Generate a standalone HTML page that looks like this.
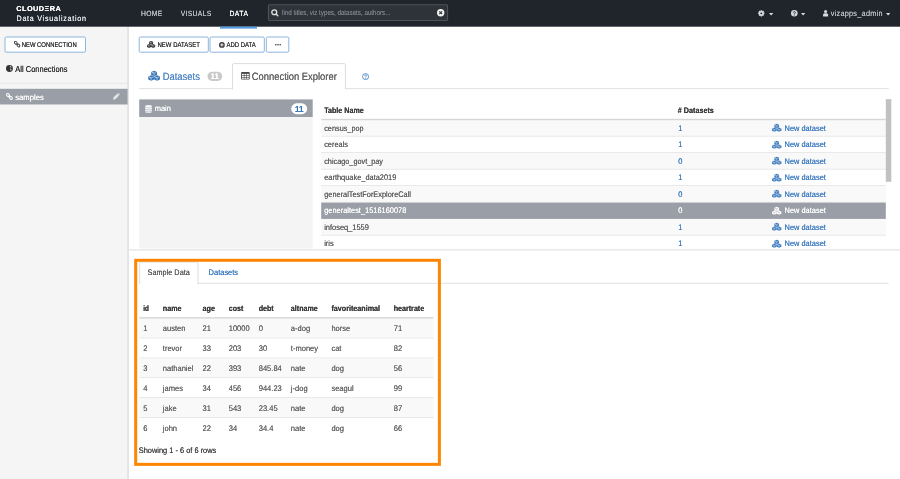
<!DOCTYPE html>
<html>
<head>
<meta charset="utf-8">
<title>Data Visualization</title>
<style>
*{box-sizing:border-box;margin:0;padding:0}
html,body{width:900px;height:479px;overflow:hidden;background:#fff}
body{font-family:"Liberation Sans",sans-serif;font-size:8px;color:#4a4a4a;position:relative}
.t{position:absolute;white-space:nowrap;transform-origin:0 50%}
svg{position:absolute;overflow:visible}
#shapes{left:0;top:0}
</style>
</head>
<body>

<!-- symbol defs -->
<svg width="0" height="0" style="left:-10px;top:-10px"><defs>
<g id="cubes">
<path d="M12 -0.6 L18 1.7999999999999998 V8.0 L12 10.6 L6 8.0 V1.7999999999999998Z" stroke-linejoin="round" stroke-width="1.2" stroke="inherit"/>
<path d="M6 8.8 L12 11.200000000000001 V17.4 L6 20.0 L0 17.4 V11.200000000000001Z" stroke-linejoin="round" stroke-width="1.2" stroke="inherit"/>
<path d="M18 8.8 L24 11.200000000000001 V17.4 L18 20.0 L12 17.4 V11.200000000000001Z" stroke-linejoin="round" stroke-width="1.2" stroke="inherit"/>
<path d="M7.1 2.5 L12 4.7" fill="none" stroke="currentColor" stroke-width="1.5"/>
<path d="M12 4.7 L16.9 2.5" fill="none" stroke="currentColor" stroke-width="0.9"/>
<path d="M12 4.7 V9.9" fill="none" stroke="currentColor" stroke-width="0.9"/>
<path d="M1.0999999999999996 11.9 L6 14.100000000000001" fill="none" stroke="currentColor" stroke-width="1.5"/>
<path d="M6 14.100000000000001 L10.9 11.9" fill="none" stroke="currentColor" stroke-width="0.9"/>
<path d="M6 14.100000000000001 V19.3" fill="none" stroke="currentColor" stroke-width="0.9"/>
<path d="M13.1 11.9 L18 14.100000000000001" fill="none" stroke="currentColor" stroke-width="1.5"/>
<path d="M18 14.100000000000001 L22.9 11.9" fill="none" stroke="currentColor" stroke-width="0.9"/>
<path d="M18 14.100000000000001 V19.3" fill="none" stroke="currentColor" stroke-width="0.9"/>
</g>
<g id="link" fill="none" stroke-width="1.8">
<ellipse cx="3.5" cy="3.5" rx="3.1" ry="2.2" transform="rotate(45 3.5 3.5)"/><ellipse cx="8.5" cy="8.5" rx="3.1" ry="2.2" transform="rotate(45 8.5 8.5)"/><path d="M4.6 4.6 L7.4 7.4" stroke-width="1.5"/>
</g>
<path id="caret" d="M0 0H8L4 4.8Z"/>
</defs></svg>

<!-- all boxes / lines (anti-aliased, fractional coordinates) -->
<svg id="shapes" width="900" height="479" viewBox="0 0 900 479">
<rect x="0.00" y="26.70" width="128.30" height="452.30" fill="#f5f5f5"/>
<rect x="127.20" y="26.70" width="1.70" height="452.30" fill="#e1e1e1"/>
<rect x="0.00" y="0.00" width="900.00" height="26.70" fill="#20252c"/>
<rect x="220.00" y="26.70" width="37.00" height="1.90" fill="#4f9be6"/>
<rect x="268.45" y="4.75" width="179.10" height="15.70" rx="1.2" fill="#2e3339" stroke="#4f5358" stroke-width="1.1"/>
<rect x="5.00" y="37.00" width="80.50" height="15.20" rx="1.3" fill="#fff" stroke="#8db4dd" stroke-width="1"/>
<rect x="139.20" y="37.00" width="69.10" height="15.20" rx="1.3" fill="#fff" stroke="#8db4dd" stroke-width="1"/>
<rect x="210.00" y="37.00" width="54.30" height="15.20" rx="1.3" fill="#fff" stroke="#8db4dd" stroke-width="1"/>
<rect x="266.30" y="37.00" width="22.50" height="15.20" rx="1.3" fill="#fff" stroke="#8db4dd" stroke-width="1"/>
<rect x="0.00" y="82.80" width="127.90" height="1.00" fill="#e6e6e6"/>
<rect x="0.00" y="88.80" width="127.60" height="15.70" fill="#9a9fa7"/>
<rect x="139.20" y="88.10" width="749.50" height="1.00" fill="#e2e2e2"/>
<path d="M232.5 89.4 V65 Q232.5 63.6 233.9 63.6 H344.0 Q345.4 63.6 345.4 65 V89.4" fill="#fff" stroke="#dddddd" stroke-width="1"/>
<rect x="207.5" y="71.7" width="14.7" height="9.2" rx="4.6" fill="#c9c9c9"/>
<rect x="139.20" y="117.00" width="173.50" height="131.50" fill="#f4f4f4"/>
<rect x="139.20" y="99.40" width="173.50" height="17.60" fill="#9a9fa7"/>
<rect x="291.2" y="103.3" width="16" height="10.9" rx="5.45" fill="#fff"/>
<rect x="321.20" y="119.95" width="564.60" height="16.50" fill="#f9f9f9"/>
<rect x="321.20" y="135.90" width="564.60" height="1.10" fill="#d9d9d9"/>
<rect x="321.20" y="136.45" width="564.60" height="16.50" fill="#fff"/>
<rect x="321.20" y="152.40" width="564.60" height="1.10" fill="#d9d9d9"/>
<rect x="321.20" y="152.95" width="564.60" height="16.50" fill="#f9f9f9"/>
<rect x="321.20" y="168.90" width="564.60" height="1.10" fill="#d9d9d9"/>
<rect x="321.20" y="169.45" width="564.60" height="16.50" fill="#fff"/>
<rect x="321.20" y="185.40" width="564.60" height="1.10" fill="#d9d9d9"/>
<rect x="321.20" y="185.95" width="564.60" height="16.50" fill="#f9f9f9"/>
<rect x="321.20" y="201.90" width="564.60" height="1.10" fill="#d9d9d9"/>
<rect x="321.20" y="202.85" width="564.60" height="16.10" fill="#9a9fa7"/>
<rect x="321.20" y="218.95" width="564.60" height="16.50" fill="#f9f9f9"/>
<rect x="321.20" y="234.90" width="564.60" height="1.10" fill="#d9d9d9"/>
<rect x="321.20" y="235.45" width="564.60" height="13.75" fill="#fff"/>
<rect x="321.20" y="118.80" width="564.60" height="1.40" fill="#d6d6d6"/>
<rect x="885.80" y="99.20" width="5.50" height="82.60" fill="#c1c1c1"/>
<rect x="128.90" y="249.40" width="771.10" height="1.00" fill="#dcdcdc"/>
<rect x="139.20" y="282.80" width="749.50" height="1.00" fill="#e2e2e2"/>
<path d="M139.7 284.4 V263.4 Q139.7 262 141.1 262 H196.6 Q198.0 262 198.0 263.4 V284.4" fill="#fff" stroke="#dddddd" stroke-width="1"/>
<rect x="139.20" y="318.45" width="294.20" height="19.88" fill="#f9f9f9"/>
<rect x="139.20" y="337.78" width="294.20" height="1.10" fill="#d9d9d9"/>
<rect x="139.20" y="338.33" width="294.20" height="19.88" fill="#fff"/>
<rect x="139.20" y="357.66" width="294.20" height="1.10" fill="#d9d9d9"/>
<rect x="139.20" y="358.21" width="294.20" height="19.88" fill="#f9f9f9"/>
<rect x="139.20" y="377.54" width="294.20" height="1.10" fill="#d9d9d9"/>
<rect x="139.20" y="378.09" width="294.20" height="19.88" fill="#fff"/>
<rect x="139.20" y="397.42" width="294.20" height="1.10" fill="#d9d9d9"/>
<rect x="139.20" y="397.97" width="294.20" height="19.88" fill="#f9f9f9"/>
<rect x="139.20" y="417.30" width="294.20" height="1.10" fill="#d9d9d9"/>
<rect x="139.20" y="417.85" width="294.20" height="19.88" fill="#fff"/>
<rect x="139.20" y="317.20" width="294.20" height="1.40" fill="#d6d6d6"/>
</svg>

<!-- NAVBAR icons -->
<svg style="left:270.7px;top:9.0px" width="7.6" height="7.6" viewBox="0 0 14 14"><circle cx="6" cy="6" r="4.5" fill="none" stroke="#dfe1e3" stroke-width="2.5"/><path d="M9.6 9.6 L12.6 12.6" stroke="#dfe1e3" stroke-width="2.6" stroke-linecap="round"/></svg>
<svg style="left:436.6px;top:9px" width="7.4" height="7.4" viewBox="0 0 16 16"><circle cx="8" cy="8" r="8" fill="#f2f2f2"/><path d="M5 5 L11 11 M11 5 L5 11" stroke="#2d3239" stroke-width="2.6" stroke-linecap="butt"/></svg>
<svg style="left:758.4px;top:10.3px" width="6.6" height="6.6" viewBox="0 0 16 16"><circle cx="8" cy="8" r="4.3" fill="none" stroke="#d5d7da" stroke-width="4.2"/><g stroke="#d5d7da" stroke-width="3.6"><path d="M8 0.4v3M8 12.6v3M0.4 8h3M12.6 8h3M2.6 2.6l2.2 2.2M11.2 11.2l2.2 2.2M2.6 13.4l2.2-2.2M11.2 4.8l2.2-2.2"/></g></svg>
<svg style="left:768.6px;top:12.9px" width="4.3" height="2.6" viewBox="0 0 8 4.8"><use href="#caret" fill="#d8dadd"/></svg>
<svg style="left:790.6px;top:10.3px" width="6.6" height="6.6" viewBox="0 0 16 16"><circle cx="8" cy="8" r="8" fill="#d5d7da"/><path d="M5.4 6.2 C5.4 3.2 10.6 3.2 10.6 6.2 C10.6 8 8 8 8 10" fill="none" stroke="#20252c" stroke-width="2.1"/><rect x="6.9" y="11.1" width="2.2" height="2.2" fill="#20252c"/></svg>
<svg style="left:800.5px;top:12.9px" width="4.3" height="2.6" viewBox="0 0 8 4.8"><use href="#caret" fill="#d8dadd"/></svg>
<svg style="left:822.7px;top:10.2px" width="5.2" height="6.6" viewBox="0 0 10 13"><circle cx="5" cy="3" r="3" fill="#d8dadd"/><path d="M0 13 V9 C0 5.5 10 5.5 10 9 V13Z" fill="#d8dadd"/></svg>
<svg style="left:886.1px;top:12.9px" width="4.3" height="2.6" viewBox="0 0 8 4.8"><use href="#caret" fill="#d8dadd"/></svg>

<!-- SIDEBAR icons -->
<svg style="left:13.7px;top:41.4px" width="6.3" height="6.3" viewBox="0 0 12 12"><use href="#link" stroke="#3c3c3c"/></svg>
<svg style="left:6px;top:65.4px" width="6.9" height="6.9" viewBox="0 0 16 16"><circle cx="8" cy="8" r="8" fill="#333"/><path d="M9.6 2.2 C11.4 2.4 12.8 3.6 13.4 5 C12.4 5.4 11.2 4.8 10.6 5.6 C10 6.4 9 5.6 9 4.4 C9 3.4 9.2 2.8 9.6 2.2Z M10 8.6 C11.2 8 13 8.8 13 10 C12.6 11.6 11.6 12.8 10.4 13.4 C10.8 11.8 9.2 10 10 8.6Z" fill="#f4f4f4" opacity=".85"/></svg>
<svg style="left:6.1px;top:93.2px" width="6.8" height="6.8" viewBox="0 0 12 12"><use href="#link" stroke="#fff"/></svg>
<svg style="left:113.3px;top:93.2px" width="6.8" height="6.8" viewBox="0 0 12 12"><path d="M0.2 11.8 L0.9 8 L7.4 1.5 L10.5 4.6 L4 11.1Z" fill="#e6e8ea"/><path d="M8.2 0.7 L11.3 3.8 L12 2.2 L9.8 0Z" fill="#e6e8ea"/></svg>

<!-- button icons -->
<svg style="left:147.2px;top:41.0px" width="8.2" height="7" viewBox="0 0 24 20"><use href="#cubes" fill="#333" color="#fff"/></svg>
<svg style="left:218.8px;top:41.8px" width="5.8" height="5.8" viewBox="0 0 16 16"><circle cx="8" cy="8" r="8" fill="#3c3c3c"/><path d="M8 3.5V12.5M3.5 8H12.5" stroke="#fff" stroke-width="2.6"/></svg>
<svg style="left:274.6px;top:43.8px" width="6" height="1.6" viewBox="0 0 15 4"><circle cx="2" cy="2" r="2" fill="#3c3c3c"/><circle cx="7.5" cy="2" r="2" fill="#3c3c3c"/><circle cx="13" cy="2" r="2" fill="#3c3c3c"/></svg>

<!-- tab icons -->
<svg style="left:147.5px;top:71.2px" width="12.2" height="9.8" viewBox="0 0 24 20"><use href="#cubes" fill="#3b78b8" color="#fff"/></svg>
<svg style="left:240.9px;top:72.2px" width="8.8" height="7.6" viewBox="0 0 17 15"><rect x="0" y="0" width="17" height="15" rx="1.6" fill="#484848"/><rect x="1.7" y="3.7" width="3.7" height="2.5" fill="#fff"/><rect x="1.7" y="7.4" width="3.7" height="2.5" fill="#fff"/><rect x="1.7" y="11.1" width="3.7" height="2.4" fill="#fff"/><rect x="6.6" y="3.7" width="3.8" height="2.5" fill="#fff"/><rect x="6.6" y="7.4" width="3.8" height="2.5" fill="#fff"/><rect x="6.6" y="11.1" width="3.8" height="2.4" fill="#fff"/><rect x="11.6" y="3.7" width="3.7" height="2.5" fill="#fff"/><rect x="11.6" y="7.4" width="3.7" height="2.5" fill="#fff"/><rect x="11.6" y="11.1" width="3.7" height="2.4" fill="#fff"/></svg>
<svg style="left:362.2px;top:72.5px" width="7.2" height="7.2" viewBox="0 0 16 16"><circle cx="8" cy="8" r="6.7" fill="none" stroke="#4a86c6" stroke-width="2"/><path d="M5.8 6.4 C5.8 3.8 10.2 3.8 10.2 6.4 C10.2 7.9 8 8 8 9.8" fill="none" stroke="#4a86c6" stroke-width="1.9"/><rect x="7.1" y="10.7" width="1.9" height="1.9" fill="#4a86c6"/></svg>
<svg style="left:145.3px;top:104.8px" width="7" height="7.9" viewBox="0 0 12 14"><ellipse cx="6" cy="2.5" rx="6" ry="2.5" fill="#f4f5f6"/><path d="M0 4.2 C2 6 10 6 12 4.2 V7 C10 8.8 2 8.8 0 7Z M0 7.9 C2 9.7 10 9.7 12 7.9 V10.7 C10 12.5 2 12.5 0 10.7Z M0 11.6 C2 13.4 10 13.4 12 11.6 V12.2 C10 14.6 2 14.6 0 12.2Z" fill="#f4f5f6"/></svg>

<svg style="left:772.3px;top:124.05px" width="9.4" height="7.9" viewBox="0 0 24 20"><use href="#cubes" fill="#3f7dc0" color="#f9f9f9"/></svg>
<svg style="left:772.3px;top:140.55px" width="9.4" height="7.9" viewBox="0 0 24 20"><use href="#cubes" fill="#3f7dc0" color="#fff"/></svg>
<svg style="left:772.3px;top:157.05px" width="9.4" height="7.9" viewBox="0 0 24 20"><use href="#cubes" fill="#3f7dc0" color="#f9f9f9"/></svg>
<svg style="left:772.3px;top:173.55px" width="9.4" height="7.9" viewBox="0 0 24 20"><use href="#cubes" fill="#3f7dc0" color="#fff"/></svg>
<svg style="left:772.3px;top:190.05px" width="9.4" height="7.9" viewBox="0 0 24 20"><use href="#cubes" fill="#3f7dc0" color="#f9f9f9"/></svg>
<svg style="left:772.3px;top:206.55px" width="9.4" height="7.9" viewBox="0 0 24 20"><use href="#cubes" fill="#fff" color="#9a9fa7"/></svg>
<svg style="left:772.3px;top:223.05px" width="9.4" height="7.9" viewBox="0 0 24 20"><use href="#cubes" fill="#3f7dc0" color="#f9f9f9"/></svg>
<svg style="left:772.3px;top:239.55px" width="9.4" height="7.9" viewBox="0 0 24 20"><use href="#cubes" fill="#3f7dc0" color="#fff"/></svg>

<div id="txt" style="position:absolute;left:0;top:0;width:900px;height:479px;opacity:.999;will-change:opacity;text-rendering:geometricPrecision;text-shadow:0 0 .45px currentColor">
<div class="t" id="logo1" style="left:16px;top:4.90px;font-size:7.1px;line-height:9.94px;height:9.94px;color:#fff;font-weight:bold;letter-spacing:0.394px;transform:translateX(0.30px) scaleX(1.0400);">CLOUDΞRA</div>
<div class="t" id="logo2" style="left:16px;top:12.70px;font-size:7.9px;line-height:11.06px;height:11.06px;color:#e9ebed;letter-spacing:0.835px;transform:translateX(0.50px) scaleX(0.9000);">Data Visualization</div>
<div class="t" id="n1" style="left:141px;top:9.00px;font-size:7.5px;line-height:10.5px;height:10.5px;color:#bfc3c7;letter-spacing:0.352px;transform:translateX(0.00px) scaleX(0.9000);">HOME</div>
<div class="t" id="n2" style="left:180px;top:9.00px;font-size:7.5px;line-height:10.5px;height:10.5px;color:#bfc3c7;letter-spacing:0.385px;transform:translateX(0.70px) scaleX(0.9000);">VISUALS</div>
<div class="t" id="n3" style="left:229px;top:9.00px;font-size:7.5px;line-height:10.5px;height:10.5px;color:#ffffff;letter-spacing:0.555px;transform:translateX(0.50px) scaleX(0.9000);">DATA</div>
<div class="t" id="srch" style="left:281px;top:7.90px;font-size:7.3px;line-height:10.22px;height:10.22px;color:#787e86;transform:translateX(0.70px) scaleX(0.8535);">find titles, viz types, datasets, authors...</div>
<div class="t" id="usr" style="left:830px;top:7.90px;font-size:8.1px;line-height:11.34px;height:11.34px;color:#b9bdc2;letter-spacing:0.296px;transform:translateX(0.70px) scaleX(0.9000);">vizapps_admin</div>
<div class="t" id="b1" style="left:21px;top:41.30px;font-size:6.9px;line-height:9.66px;height:9.66px;color:#333;transform:translateX(0.70px) scaleX(0.8552);">NEW CONNECTION</div>
<div class="t" id="allc" style="left:15px;top:62.70px;font-size:8.6px;line-height:12.04px;height:12.04px;color:#333;transform:translateX(0.30px) scaleX(0.8741);">All Connections</div>
<div class="t" id="smp" style="left:15px;top:91.90px;font-size:8.125px;line-height:11.38px;height:11.38px;color:#fff;transform:translateX(0.30px) scaleX(0.9403);">samples</div>
<div class="t" id="b2" style="left:157px;top:41.30px;font-size:6.9px;line-height:9.66px;height:9.66px;color:#333;transform:translateX(0.50px) scaleX(0.8697);">NEW DATASET</div>
<div class="t" id="b3" style="left:226px;top:41.30px;font-size:6.9px;line-height:9.66px;height:9.66px;color:#333;transform:translateX(0.50px) scaleX(0.8661);">ADD DATA</div>
<div class="t" id="tab1" style="left:162px;top:69.90px;font-size:10.6px;line-height:14.84px;height:14.84px;color:#558bc7;transform:translateX(0.70px) scaleX(0.8897);">Datasets</div>
<div class="t" id="bd1" style="left:210px;top:71.30px;font-size:8.0px;line-height:11.2px;height:11.2px;color:#fff;font-weight:bold;transform:translateX(0.60px) scaleX(0.9683);">11</div>
<div class="t" id="tab2" style="left:251px;top:70.00px;font-size:10.6px;line-height:14.84px;height:14.84px;color:#636363;transform:translateX(0.80px) scaleX(0.8854);">Connection Explorer</div>
<div class="t" id="mn" style="left:154px;top:103.00px;font-size:8.125px;line-height:11.38px;height:11.38px;color:#fff;transform:translateX(0.80px) scaleX(0.9159);">main</div>
<div class="t" id="bd2" style="left:294px;top:102.90px;font-size:8.8px;line-height:12.32px;height:12.32px;color:#3b78b8;font-weight:bold;transform:translateX(0.90px) scaleX(0.9235);">11</div>
<div class="t" id="th1" style="left:324px;top:105.40px;font-size:8.125px;line-height:11.38px;height:11.38px;color:#3d3d3d;font-weight:bold;transform:translateX(0.20px) scaleX(0.8793);">Table Name</div>
<div class="t" id="th2" style="left:677px;top:105.40px;font-size:8.125px;line-height:11.38px;height:11.38px;color:#3d3d3d;font-weight:bold;transform:translateX(0.80px) scaleX(0.8872);"># Datasets</div>
<div class="t" id="r0" style="left:324px;top:122.75px;font-size:8.125px;line-height:11.38px;height:11.38px;color:#606060;transform:translateX(0.20px) scaleX(0.9006);">census_pop</div>
<div class="t" id="k0" style="left:678px;top:122.75px;font-size:8.125px;line-height:11.38px;height:11.38px;color:#3f7dc0;transform:translateX(0.20px) scaleX(0.9300);">1</div>
<div class="t" id="nd0" style="left:784px;top:122.75px;font-size:8.125px;line-height:11.38px;height:11.38px;color:#3f7dc0;transform:translateX(0.50px) scaleX(0.9184);">New dataset</div>
<div class="t" id="r1" style="left:324px;top:139.25px;font-size:8.125px;line-height:11.38px;height:11.38px;color:#606060;transform:translateX(0.20px) scaleX(0.9061);">cereals</div>
<div class="t" id="k1" style="left:678px;top:139.25px;font-size:8.125px;line-height:11.38px;height:11.38px;color:#3f7dc0;transform:translateX(0.20px) scaleX(0.9300);">1</div>
<div class="t" id="nd1" style="left:784px;top:139.25px;font-size:8.125px;line-height:11.38px;height:11.38px;color:#3f7dc0;transform:translateX(0.50px) scaleX(0.9184);">New dataset</div>
<div class="t" id="r2" style="left:324px;top:155.75px;font-size:8.125px;line-height:11.38px;height:11.38px;color:#606060;transform:translateX(0.20px) scaleX(0.8994);">chicago_govt_pay</div>
<div class="t" id="k2" style="left:678px;top:155.75px;font-size:8.125px;line-height:11.38px;height:11.38px;color:#3f7dc0;transform:translateX(0.20px) scaleX(0.9300);">0</div>
<div class="t" id="nd2" style="left:784px;top:155.75px;font-size:8.125px;line-height:11.38px;height:11.38px;color:#3f7dc0;transform:translateX(0.50px) scaleX(0.9184);">New dataset</div>
<div class="t" id="r3" style="left:324px;top:172.25px;font-size:8.125px;line-height:11.38px;height:11.38px;color:#606060;transform:translateX(0.20px) scaleX(0.9136);">earthquake_data2019</div>
<div class="t" id="k3" style="left:678px;top:172.25px;font-size:8.125px;line-height:11.38px;height:11.38px;color:#3f7dc0;transform:translateX(0.20px) scaleX(0.9300);">1</div>
<div class="t" id="nd3" style="left:784px;top:172.25px;font-size:8.125px;line-height:11.38px;height:11.38px;color:#3f7dc0;transform:translateX(0.50px) scaleX(0.9184);">New dataset</div>
<div class="t" id="r4" style="left:324px;top:188.75px;font-size:8.125px;line-height:11.38px;height:11.38px;color:#606060;transform:translateX(0.20px) scaleX(0.9083);">generalTestForExploreCall</div>
<div class="t" id="k4" style="left:678px;top:188.75px;font-size:8.125px;line-height:11.38px;height:11.38px;color:#3f7dc0;transform:translateX(0.20px) scaleX(0.9300);">0</div>
<div class="t" id="nd4" style="left:784px;top:188.75px;font-size:8.125px;line-height:11.38px;height:11.38px;color:#3f7dc0;transform:translateX(0.50px) scaleX(0.9184);">New dataset</div>
<div class="t" id="r5" style="left:324px;top:205.25px;font-size:8.125px;line-height:11.38px;height:11.38px;color:#fff;transform:translateX(0.20px) scaleX(0.9149);">generaltest_1516160078</div>
<div class="t" id="k5" style="left:678px;top:205.25px;font-size:8.125px;line-height:11.38px;height:11.38px;color:#fff;transform:translateX(0.20px) scaleX(0.9300);">0</div>
<div class="t" id="nd5" style="left:784px;top:205.25px;font-size:8.125px;line-height:11.38px;height:11.38px;color:#fff;transform:translateX(0.50px) scaleX(0.9184);">New dataset</div>
<div class="t" id="r6" style="left:324px;top:221.75px;font-size:8.125px;line-height:11.38px;height:11.38px;color:#606060;transform:translateX(0.20px) scaleX(0.9178);">infoseq_1559</div>
<div class="t" id="k6" style="left:678px;top:221.75px;font-size:8.125px;line-height:11.38px;height:11.38px;color:#3f7dc0;transform:translateX(0.20px) scaleX(0.9300);">1</div>
<div class="t" id="nd6" style="left:784px;top:221.75px;font-size:8.125px;line-height:11.38px;height:11.38px;color:#3f7dc0;transform:translateX(0.50px) scaleX(0.9184);">New dataset</div>
<div class="t" id="r7" style="left:324px;top:238.25px;font-size:8.125px;line-height:11.38px;height:11.38px;color:#606060;transform:translateX(0.20px) scaleX(0.9267);">iris</div>
<div class="t" id="k7" style="left:678px;top:238.25px;font-size:8.125px;line-height:11.38px;height:11.38px;color:#3f7dc0;transform:translateX(0.20px) scaleX(0.9300);">1</div>
<div class="t" id="nd7" style="left:784px;top:238.25px;font-size:8.125px;line-height:11.38px;height:11.38px;color:#3f7dc0;transform:translateX(0.50px) scaleX(0.9184);">New dataset</div>
<div class="t" id="st1" style="left:147px;top:267.30px;font-size:8.125px;line-height:11.38px;height:11.38px;color:#5a5a5a;transform:translateX(0.60px) scaleX(0.9000);">Sample Data</div>
<div class="t" id="st2" style="left:208px;top:267.30px;font-size:8.125px;line-height:11.38px;height:11.38px;color:#3f7dc0;transform:translateX(0.60px) scaleX(0.9214);">Datasets</div>
<div class="t" id="bh0" style="left:143px;top:302.60px;font-size:8.125px;line-height:11.38px;height:11.38px;color:#3d3d3d;font-weight:bold;transform:translateX(0.30px) scaleX(0.7758);">id</div>
<div class="t" id="bh1" style="left:162px;top:302.60px;font-size:8.125px;line-height:11.38px;height:11.38px;color:#3d3d3d;font-weight:bold;transform:translateX(0.80px) scaleX(0.8826);">name</div>
<div class="t" id="bh2" style="left:202px;top:302.60px;font-size:8.125px;line-height:11.38px;height:11.38px;color:#3d3d3d;font-weight:bold;transform:translateX(0.50px) scaleX(0.8939);">age</div>
<div class="t" id="bh3" style="left:228px;top:302.60px;font-size:8.125px;line-height:11.38px;height:11.38px;color:#3d3d3d;font-weight:bold;transform:translateX(0.70px) scaleX(0.8749);">cost</div>
<div class="t" id="bh4" style="left:258px;top:302.60px;font-size:8.125px;line-height:11.38px;height:11.38px;color:#3d3d3d;font-weight:bold;transform:translateX(0.70px) scaleX(0.8759);">debt</div>
<div class="t" id="bh5" style="left:290px;top:302.60px;font-size:8.125px;line-height:11.38px;height:11.38px;color:#3d3d3d;font-weight:bold;transform:translateX(0.80px) scaleX(0.8807);">altname</div>
<div class="t" id="bh6" style="left:331px;top:302.60px;font-size:8.125px;line-height:11.38px;height:11.38px;color:#3d3d3d;font-weight:bold;transform:translateX(0.40px) scaleX(0.8857);">favoriteanimal</div>
<div class="t" id="bh7" style="left:393px;top:302.60px;font-size:8.125px;line-height:11.38px;height:11.38px;color:#3d3d3d;font-weight:bold;transform:translateX(0.70px) scaleX(0.8785);">heartrate</div>
<div class="t" id="c0_0" style="left:143px;top:323.10px;font-size:8.125px;line-height:11.38px;height:11.38px;color:#666;transform:translateX(0.30px) scaleX(0.9300);">1</div>
<div class="t" id="c0_1" style="left:162px;top:323.10px;font-size:8.125px;line-height:11.38px;height:11.38px;color:#666;transform:translateX(0.80px) scaleX(0.9300);">austen</div>
<div class="t" id="c0_2" style="left:202px;top:323.10px;font-size:8.125px;line-height:11.38px;height:11.38px;color:#666;transform:translateX(0.50px) scaleX(0.9300);">21</div>
<div class="t" id="c0_3" style="left:228px;top:323.10px;font-size:8.125px;line-height:11.38px;height:11.38px;color:#666;transform:translateX(0.70px) scaleX(0.9300);">10000</div>
<div class="t" id="c0_4" style="left:258px;top:323.10px;font-size:8.125px;line-height:11.38px;height:11.38px;color:#666;transform:translateX(0.70px) scaleX(0.9300);">0</div>
<div class="t" id="c0_5" style="left:290px;top:323.10px;font-size:8.125px;line-height:11.38px;height:11.38px;color:#666;transform:translateX(0.80px) scaleX(0.9300);">a-dog</div>
<div class="t" id="c0_6" style="left:331px;top:323.10px;font-size:8.125px;line-height:11.38px;height:11.38px;color:#666;transform:translateX(0.40px) scaleX(0.9300);">horse</div>
<div class="t" id="c0_7" style="left:393px;top:323.10px;font-size:8.125px;line-height:11.38px;height:11.38px;color:#666;transform:translateX(0.70px) scaleX(0.9300);">71</div>
<div class="t" id="c1_0" style="left:143px;top:342.98px;font-size:8.125px;line-height:11.38px;height:11.38px;color:#666;transform:translateX(0.30px) scaleX(0.9300);">2</div>
<div class="t" id="c1_1" style="left:162px;top:342.98px;font-size:8.125px;line-height:11.38px;height:11.38px;color:#666;transform:translateX(0.80px) scaleX(0.9300);">trevor</div>
<div class="t" id="c1_2" style="left:202px;top:342.98px;font-size:8.125px;line-height:11.38px;height:11.38px;color:#666;transform:translateX(0.50px) scaleX(0.9300);">33</div>
<div class="t" id="c1_3" style="left:228px;top:342.98px;font-size:8.125px;line-height:11.38px;height:11.38px;color:#666;transform:translateX(0.70px) scaleX(0.9300);">203</div>
<div class="t" id="c1_4" style="left:258px;top:342.98px;font-size:8.125px;line-height:11.38px;height:11.38px;color:#666;transform:translateX(0.70px) scaleX(0.9300);">30</div>
<div class="t" id="c1_5" style="left:290px;top:342.98px;font-size:8.125px;line-height:11.38px;height:11.38px;color:#666;transform:translateX(0.80px) scaleX(0.9300);">t-money</div>
<div class="t" id="c1_6" style="left:331px;top:342.98px;font-size:8.125px;line-height:11.38px;height:11.38px;color:#666;transform:translateX(0.40px) scaleX(0.9300);">cat</div>
<div class="t" id="c1_7" style="left:393px;top:342.98px;font-size:8.125px;line-height:11.38px;height:11.38px;color:#666;transform:translateX(0.70px) scaleX(0.9300);">82</div>
<div class="t" id="c2_0" style="left:143px;top:362.86px;font-size:8.125px;line-height:11.38px;height:11.38px;color:#666;transform:translateX(0.30px) scaleX(0.9300);">3</div>
<div class="t" id="c2_1" style="left:162px;top:362.86px;font-size:8.125px;line-height:11.38px;height:11.38px;color:#666;transform:translateX(0.80px) scaleX(0.9300);">nathaniel</div>
<div class="t" id="c2_2" style="left:202px;top:362.86px;font-size:8.125px;line-height:11.38px;height:11.38px;color:#666;transform:translateX(0.50px) scaleX(0.9300);">22</div>
<div class="t" id="c2_3" style="left:228px;top:362.86px;font-size:8.125px;line-height:11.38px;height:11.38px;color:#666;transform:translateX(0.70px) scaleX(0.9300);">393</div>
<div class="t" id="c2_4" style="left:258px;top:362.86px;font-size:8.125px;line-height:11.38px;height:11.38px;color:#666;transform:translateX(0.70px) scaleX(0.9300);">845.84</div>
<div class="t" id="c2_5" style="left:290px;top:362.86px;font-size:8.125px;line-height:11.38px;height:11.38px;color:#666;transform:translateX(0.80px) scaleX(0.9300);">nate</div>
<div class="t" id="c2_6" style="left:331px;top:362.86px;font-size:8.125px;line-height:11.38px;height:11.38px;color:#666;transform:translateX(0.40px) scaleX(0.9300);">dog</div>
<div class="t" id="c2_7" style="left:393px;top:362.86px;font-size:8.125px;line-height:11.38px;height:11.38px;color:#666;transform:translateX(0.70px) scaleX(0.9300);">56</div>
<div class="t" id="c3_0" style="left:143px;top:382.74px;font-size:8.125px;line-height:11.38px;height:11.38px;color:#666;transform:translateX(0.30px) scaleX(0.9300);">4</div>
<div class="t" id="c3_1" style="left:162px;top:382.74px;font-size:8.125px;line-height:11.38px;height:11.38px;color:#666;transform:translateX(0.80px) scaleX(0.9300);">james</div>
<div class="t" id="c3_2" style="left:202px;top:382.74px;font-size:8.125px;line-height:11.38px;height:11.38px;color:#666;transform:translateX(0.50px) scaleX(0.9300);">34</div>
<div class="t" id="c3_3" style="left:228px;top:382.74px;font-size:8.125px;line-height:11.38px;height:11.38px;color:#666;transform:translateX(0.70px) scaleX(0.9300);">456</div>
<div class="t" id="c3_4" style="left:258px;top:382.74px;font-size:8.125px;line-height:11.38px;height:11.38px;color:#666;transform:translateX(0.70px) scaleX(0.9300);">944.23</div>
<div class="t" id="c3_5" style="left:290px;top:382.74px;font-size:8.125px;line-height:11.38px;height:11.38px;color:#666;transform:translateX(0.80px) scaleX(0.9300);">j-dog</div>
<div class="t" id="c3_6" style="left:331px;top:382.74px;font-size:8.125px;line-height:11.38px;height:11.38px;color:#666;transform:translateX(0.40px) scaleX(0.9300);">seagul</div>
<div class="t" id="c3_7" style="left:393px;top:382.74px;font-size:8.125px;line-height:11.38px;height:11.38px;color:#666;transform:translateX(0.70px) scaleX(0.9300);">99</div>
<div class="t" id="c4_0" style="left:143px;top:402.62px;font-size:8.125px;line-height:11.38px;height:11.38px;color:#666;transform:translateX(0.30px) scaleX(0.9300);">5</div>
<div class="t" id="c4_1" style="left:162px;top:402.62px;font-size:8.125px;line-height:11.38px;height:11.38px;color:#666;transform:translateX(0.80px) scaleX(0.9300);">jake</div>
<div class="t" id="c4_2" style="left:202px;top:402.62px;font-size:8.125px;line-height:11.38px;height:11.38px;color:#666;transform:translateX(0.50px) scaleX(0.9300);">31</div>
<div class="t" id="c4_3" style="left:228px;top:402.62px;font-size:8.125px;line-height:11.38px;height:11.38px;color:#666;transform:translateX(0.70px) scaleX(0.9300);">543</div>
<div class="t" id="c4_4" style="left:258px;top:402.62px;font-size:8.125px;line-height:11.38px;height:11.38px;color:#666;transform:translateX(0.70px) scaleX(0.9300);">23.45</div>
<div class="t" id="c4_5" style="left:290px;top:402.62px;font-size:8.125px;line-height:11.38px;height:11.38px;color:#666;transform:translateX(0.80px) scaleX(0.9300);">nate</div>
<div class="t" id="c4_6" style="left:331px;top:402.62px;font-size:8.125px;line-height:11.38px;height:11.38px;color:#666;transform:translateX(0.40px) scaleX(0.9300);">dog</div>
<div class="t" id="c4_7" style="left:393px;top:402.62px;font-size:8.125px;line-height:11.38px;height:11.38px;color:#666;transform:translateX(0.70px) scaleX(0.9300);">87</div>
<div class="t" id="c5_0" style="left:143px;top:422.50px;font-size:8.125px;line-height:11.38px;height:11.38px;color:#666;transform:translateX(0.30px) scaleX(0.9300);">6</div>
<div class="t" id="c5_1" style="left:162px;top:422.50px;font-size:8.125px;line-height:11.38px;height:11.38px;color:#666;transform:translateX(0.80px) scaleX(0.9300);">john</div>
<div class="t" id="c5_2" style="left:202px;top:422.50px;font-size:8.125px;line-height:11.38px;height:11.38px;color:#666;transform:translateX(0.50px) scaleX(0.9300);">22</div>
<div class="t" id="c5_3" style="left:228px;top:422.50px;font-size:8.125px;line-height:11.38px;height:11.38px;color:#666;transform:translateX(0.70px) scaleX(0.9300);">34</div>
<div class="t" id="c5_4" style="left:258px;top:422.50px;font-size:8.125px;line-height:11.38px;height:11.38px;color:#666;transform:translateX(0.70px) scaleX(0.9300);">34.4</div>
<div class="t" id="c5_5" style="left:290px;top:422.50px;font-size:8.125px;line-height:11.38px;height:11.38px;color:#666;transform:translateX(0.80px) scaleX(0.9300);">nate</div>
<div class="t" id="c5_6" style="left:331px;top:422.50px;font-size:8.125px;line-height:11.38px;height:11.38px;color:#666;transform:translateX(0.40px) scaleX(0.9300);">dog</div>
<div class="t" id="c5_7" style="left:393px;top:422.50px;font-size:8.125px;line-height:11.38px;height:11.38px;color:#666;transform:translateX(0.70px) scaleX(0.9300);">66</div>
<div class="t" id="shw" style="left:138px;top:445.00px;font-size:8.125px;line-height:11.38px;height:11.38px;color:#444;transform:translateX(0.80px) scaleX(0.9145);">Showing 1 - 6 of 6 rows</div>
</div>

<!-- orange highlight (on top) -->
<svg style="left:0;top:0" width="900" height="479" viewBox="0 0 900 479"><rect x="135.7" y="260.3" width="303.7" height="204.05" fill="none" stroke="#ff8400" stroke-width="3"/></svg>

</body>
</html>
